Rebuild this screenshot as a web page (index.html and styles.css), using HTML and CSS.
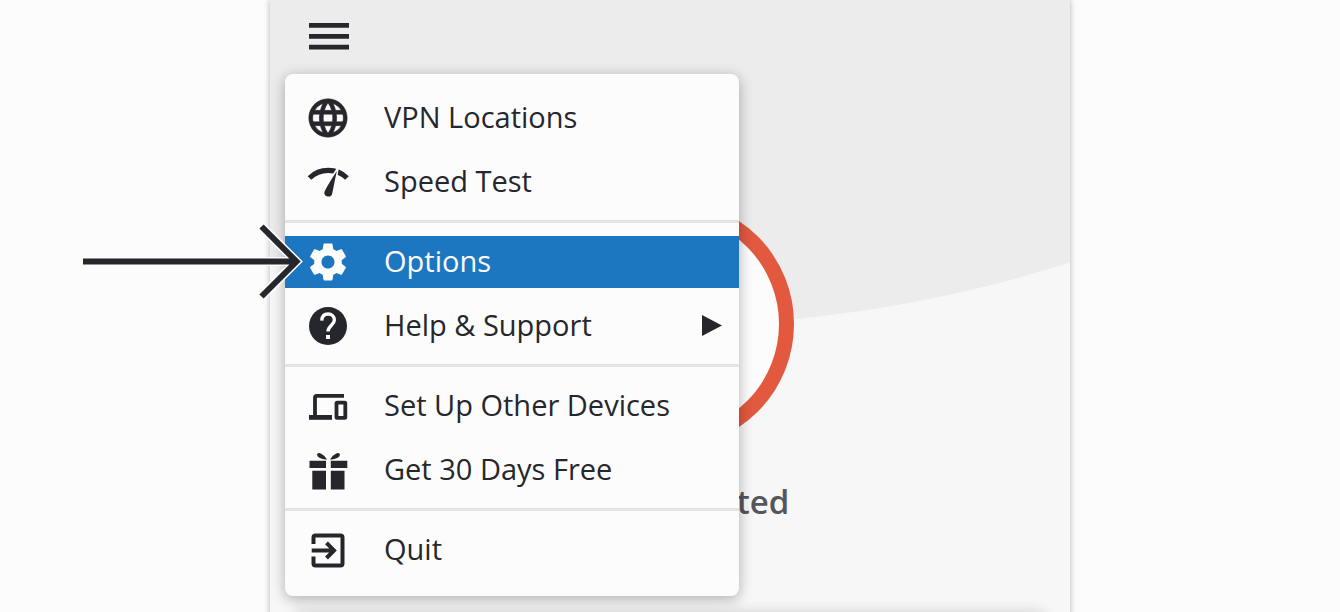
FILE: index.html
```html
<!DOCTYPE html>
<html lang="en">
<head>
  <meta charset="UTF-8">
  <title>VPN Menu</title>
  <link rel="stylesheet" href="styles.css">
</head>
<body>
  <div class="app">
    <!-- curved backdrop -->
    <svg class="backdrop" viewBox="0 0 800 330" aria-hidden="true">
      <circle cx="400" cy="-985" r="1310" />
    </svg>

    <header class="header">
      <button class="menu-btn" aria-label="Menu">
        <svg width="40" height="28" viewBox="0 0 40 28">
          <path d="M0 2.4h40M0 13.3h40M0 24.2h40" stroke="currentColor" stroke-width="4.8" />
        </svg>
      </button>
    </header>

    <main class="status">
      <svg class="ring" width="248" height="248" viewBox="0 0 248 248">
        <circle cx="124" cy="124" r="116.5" />
      </svg>
      <p class="status-text">Not Connected</p>
      <div class="location-card"></div>
    </main>

    <nav class="menu">
      <button class="menu-item">
        <svg class="icon" viewBox="0 0 24 24">
          <path fill="currentColor" stroke="currentColor" stroke-width="0.3" d="M11.99 2C6.47 2 2 6.48 2 12s4.47 10 9.99 10C17.52 22 22 17.52 22 12S17.52 2 11.99 2zm6.93 6h-2.95c-.32-1.25-.78-2.45-1.38-3.56 1.84.63 3.37 1.91 4.33 3.56zM12 4.04c.83 1.2 1.48 2.53 1.91 3.96h-3.82c.43-1.43 1.08-2.76 1.91-3.96zM4.26 14C4.1 13.36 4 12.69 4 12s.1-1.36.26-2h3.38c-.08.66-.14 1.32-.14 2 0 .68.06 1.34.14 2H4.26zm.82 2h2.95c.32 1.25.78 2.45 1.38 3.56-1.84-.63-3.37-1.9-4.33-3.56zm2.95-8H5.08c.96-1.66 2.49-2.93 4.33-3.56C8.81 5.55 8.35 6.75 8.03 8zM12 19.96c-.83-1.2-1.48-2.53-1.91-3.96h3.82c-.43 1.43-1.08 2.76-1.91 3.96zM14.34 14H9.66c-.09-.66-.16-1.32-.16-2 0-.68.07-1.35.16-2h4.68c.09.65.16 1.32.16 2 0 .68-.07 1.34-.16 2zm.25 5.56c.6-1.11 1.06-2.31 1.38-3.56h2.95c-.96 1.65-2.49 2.93-4.33 3.56zM16.36 14c.08-.66.14-1.32.14-2 0-.68-.06-1.34-.14-2h3.38c.16.64.26 1.31.26 2s-.1 1.36-.26 2h-3.38z" />
        </svg>
        <span class="label">VPN Locations</span>
      </button>
      <button class="menu-item">
        <svg class="icon" viewBox="0 0 46 46">
          <path d="M4.500 19A27 27 0 0 1 42 19" fill="none" stroke="currentColor" stroke-width="5.2" />
          <path class="needle" d="M33.400 8L28 34.400a4.700 4.700 0 0 1-9.300-1.600Q19.500 29.500 33.400 8z" />
        </svg>
        <span class="label">Speed Test</span>
      </button>
      <hr>
      <button class="menu-item active">
        <svg class="icon" viewBox="0 0 24 24">
          <path fill="currentColor" d="M19.14 12.94c.04-.3.06-.61.06-.94 0-.32-.02-.64-.07-.94l2.03-1.58c.18-.14.23-.41.12-.61l-1.92-3.32c-.12-.22-.37-.29-.59-.22l-2.39.96c-.5-.38-1.03-.7-1.62-.94l-.36-2.54c-.04-.24-.24-.41-.48-.41h-3.84c-.24 0-.43.17-.47.41l-.36 2.54c-.59.24-1.13.57-1.62.94l-2.39-.96c-.22-.08-.47 0-.59.22L2.74 8.87c-.12.21-.08.47.12.61l2.03 1.58c-.05.3-.09.63-.09.94s.02.64.07.94l-2.03 1.58c-.18.14-.23.41-.12.61l1.92 3.32c.12.22.37.29.59.22l2.39-.96c.5.38 1.03.7 1.62.94l.36 2.54c.05.24.24.41.48.41h3.84c.24 0 .44-.17.47-.41l.36-2.54c.59-.24 1.13-.56 1.62-.94l2.39.96c.22.08.47 0 .59-.22l1.92-3.32c.12-.22.07-.47-.12-.61l-2.01-1.58zM12 15.4c-1.88 0-3.4-1.52-3.4-3.4s1.52-3.4 3.4-3.4 3.4 1.52 3.4 3.4-1.52 3.4-3.4 3.4z" />
        </svg>
        <span class="label">Options</span>
      </button>
      <button class="menu-item">
        <svg class="icon" viewBox="0 0 46 46">
          <circle cx="23" cy="23" r="19" fill="currentColor" />
          <path class="question" d="M16.700 17.600C17 13.200 19.600 11 23 11c3.700 0 6.400 2.400 6.400 6 0 5-6.400 5.600-6.400 11.600" />
          <rect class="question-dot" x="21" y="32" width="4" height="4" />
        </svg>
        <span class="label">Help &amp; Support</span>
        <svg class="caret" width="20" height="22" viewBox="0 0 20 22">
          <path fill="currentColor" d="M0 0L20 10.500 0 21z" />
        </svg>
      </button>
      <hr>
      <button class="menu-item">
        <svg class="icon" viewBox="0 0 46 46">
          <path d="M10 33V14.500q0-1.600 1.600-1.600H39" fill="none" stroke="currentColor" stroke-width="3.8" />
          <rect x="4" y="32" width="23" height="4.800" fill="currentColor" />
          <rect x="31.500" y="19.600" width="8.800" height="15.200" rx="0.6" fill="none" stroke="currentColor" stroke-width="3.8" />
        </svg>
        <span class="label">Set Up Other Devices</span>
      </button>
      <button class="menu-item">
        <svg class="icon" viewBox="0 0 46 46">
          <path fill="currentColor" d="M4.500 13.800h16.500v7.200H4.500zM25.800 13.800h16.500v7.200H25.800zM7.300 23.800h13.700v18.700H7.300zM25.800 23.800h13.700v18.700H25.800zM12 7.400Q13.200 5.200 15.800 6.400 20 8.400 22 12.400 18 12.800 14.800 11 12 9.400 12 7.400zM35 7.400Q33.800 5.200 31.200 6.400 27 8.400 25 12.400 29 12.800 32.200 11 35 9.400 35 7.400z" />
        </svg>
        <span class="label">Get 30 Days Free</span>
      </button>
      <hr>
      <button class="menu-item">
        <svg class="icon" viewBox="0 0 46 46">
          <path d="M8.500 17V10.400q0-2 2-2H35.500q2 0 2 2V36.400q0 2-2 2H10.500q-2 0-2-2V29.600M6.700 23.400H29M21.500 15.800L29 23.400 21.500 31" fill="none" stroke="currentColor" stroke-width="4" />
        </svg>
        <span class="label">Quit</span>
      </button>
    </nav>

    <!-- pointer to the Options row -->
    <svg class="pointer" width="224" height="80" viewBox="0 0 224 80" aria-hidden="true">
      <path class="pointer-edge" d="M0 40.500H213.500M178.500 5.500L213.500 40.500 178.500 75.500" />
      <path class="pointer-line" d="M0 40.500H213.500M178.500 5.500L213.500 40.500 178.500 75.500" />
    </svg>
  </div>
</body>
</html>
```
FILE: styles.css
```css
body {
  margin: 0;
  height: 100vh;
  overflow: hidden;
  background: #fcfcfc;
  color: #26272c;
  font-family: "Open Sans", "Noto Sans", sans-serif;
}
.app {
  position: relative;
  max-width: 800px;
  min-height: 100vh;
  margin: 0 auto;
  background: #f7f7f7;
  box-shadow: 0 0 6px rgba(0, 0, 0, 0.3);
}
.backdrop {
  position: absolute;
  top: 0;
  left: 0;
  width: 100%;
  fill: #ececec;
}
.header {
  position: relative;
  display: flex;
  padding: 23px 39px;
}
.menu-btn {
  display: flex;
  padding: 0;
  border: none;
  background: none;
  color: inherit;
  cursor: pointer;
}
.status {
  position: relative;
  display: flex;
  flex-direction: column;
  align-items: center;
  padding-top: 126px;
}
.ring {
  fill: #fcfcfc;
  stroke: #e2593f;
  stroke-width: 15;
}
.status-text {
  margin: 32px 0 88px;
  font-size: 33px;
  font-weight: 600;
  line-height: 44px;
  color: #55565b;
}
.location-card {
  align-self: stretch;
  height: 80px;
  margin: 0 24px;
  border-radius: 8px;
  background: #fcfcfc;
  box-shadow: 0 0 14px rgba(0, 0, 0, 0.16);
}
.menu {
  position: absolute;
  top: 74px;
  left: 15px;
  width: 454px;
  display: flex;
  flex-direction: column;
  gap: 12px;
  padding: 18px 0 20px;
  box-sizing: border-box;
  border-radius: 8px;
  background: #fcfcfc;
  box-shadow: 0 3px 14px rgba(0, 0, 0, 0.3);
}
.menu hr {
  width: 100%;
  height: 3px;
  margin: 0 0 1px;
  border: none;
  background: #e4e4e4;
}
.menu-item {
  display: flex;
  align-items: center;
  gap: 33px;
  height: 52px;
  padding: 0 17px 0 20px;
  border: none;
  background: none;
  color: inherit;
  font: inherit;
  font-size: 29px;
  cursor: pointer;
}
.menu-item.active {
  background: #1c77c0;
  color: #fcfcfc;
}
.label { padding-bottom: 3px; }
.icon {
  width: 46px;
  height: 46px;
}
.needle {
  fill: currentColor;
  stroke: #fcfcfc;
  stroke-width: 1.5;
}
.question {
  fill: none;
  stroke: #fcfcfc;
  stroke-width: 3.4;
}
.question-dot { fill: #fcfcfc; }
.caret { margin-left: auto; }
.pointer {
  position: absolute;
  top: 221px;
  left: -187px;
  fill: none;
}
.pointer-edge {
  stroke: #fcfcfc;
  stroke-width: 9;
}
.pointer-line {
  stroke: #26272c;
  stroke-width: 6;
}
```
